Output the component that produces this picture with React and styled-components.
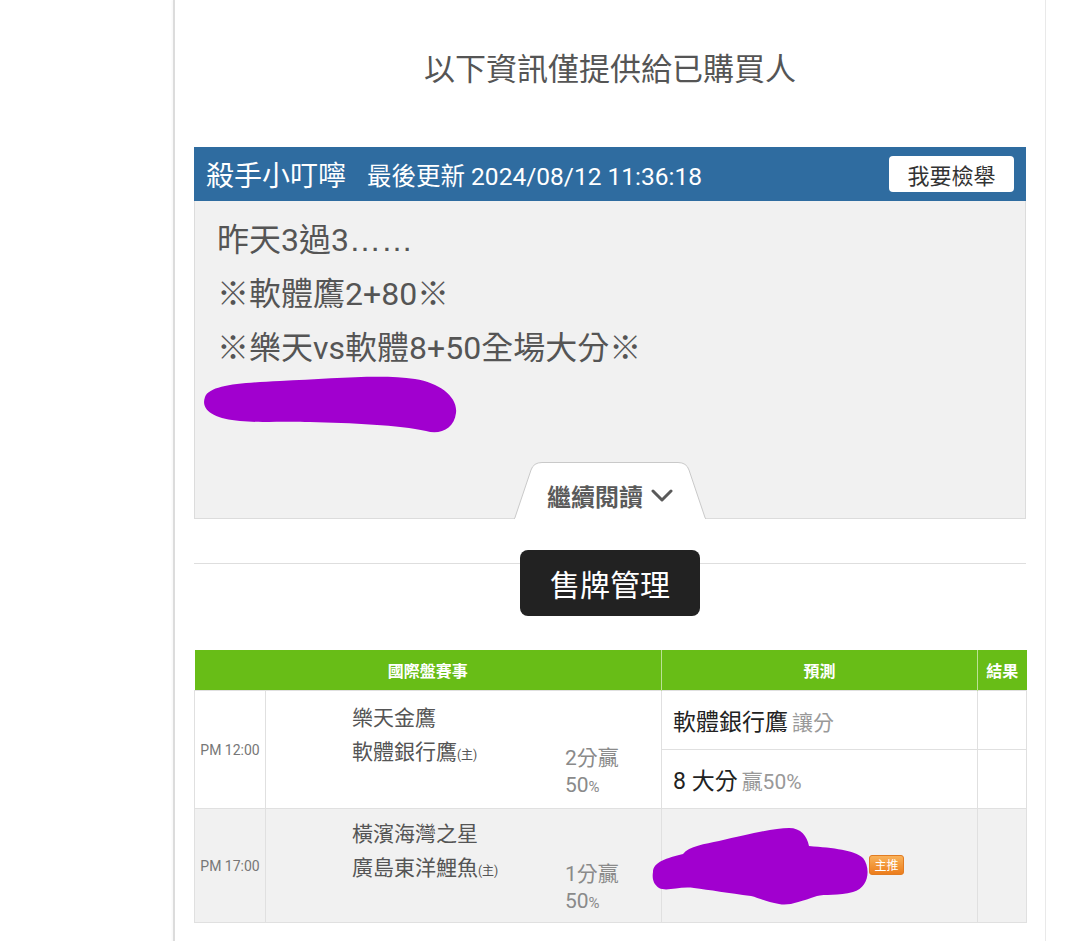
import React from 'react';
import styled, { createGlobalStyle } from 'styled-components';

const GlobalStyle = createGlobalStyle`
  html, body { margin: 0; padding: 0; background: #fff; }
  body { font-family: Roboto, "Noto Sans CJK TC", sans-serif; color: #555; }
`;

const Page = styled.div`
  margin-left: 173px;
  width: 832px;
  min-height: 941px;
  padding: 0 19px 20px;
  border-left: 2px solid #dcdcdc;
  border-right: 1px solid #e9e9e9;
  box-shadow: -1px 0 2px rgba(0, 0, 0, 0.04);
`;

const Notice = styled.h2`
  margin: 0;
  padding-top: 50px;
  height: 40px;
  line-height: 40px;
  text-align: center;
  font-size: 31px;
  font-weight: 400;
  color: #555;
`;

const PostCard = styled.section`
  margin-top: 57px;
`;

const PostHeader = styled.header`
  height: 54px;
  background: #2f6ca0;
  display: flex;
  align-items: center;
  padding: 0 12px;
  color: #fff;
`;

const Author = styled.span`
  font-size: 28px;
`;

const Updated = styled.span`
  font-size: 24.5px;
  margin-left: 21px;
`;

const ReportButton = styled.button`
  margin-left: auto;
  width: 125px;
  height: 36px;
  background: #fff;
  border: none;
  border-radius: 4px;
  font-family: inherit;
  font-size: 22px;
  color: #333;
  padding: 0;
`;

const PostBody = styled.div`
  background: #f1f1f1;
  border: 1px solid #dcdcdc;
  border-top: none;
  height: 318px;
  display: flex;
  flex-direction: column;
  padding: 12px 0 0 22px;
  box-sizing: border-box;
`;

const PostLine = styled.p`
  margin: 0;
  font-size: 32px;
  line-height: 54px;
  color: #555;
`;

const Ellipsis = styled.span`
  font-family: "Liberation Sans", sans-serif;
`;

const Scribble = styled.svg`
  display: block;
  margin-left: ${(p) => p.$offset || 0}px;
  flex: none;
`;

const ReadMoreTab = styled.button`
  position: relative;
  align-self: center;
  margin: auto 0 -1px -22px;
  width: 192px;
  height: 57px;
  border: none;
  background: transparent;
  padding: 10px 0 0;
  display: flex;
  align-items: center;
  justify-content: center;
  font-family: inherit;
  font-size: 24px;
  font-weight: 700;
  color: #5a5a5a;
`;

const TabShape = styled.svg`
  position: absolute;
  left: 0;
  top: 0;
  z-index: 0;
`;

const TabLabel = styled.span`
  position: relative;
  z-index: 1;
  display: flex;
  align-items: center;
  gap: 8px;
`;

const Divider = styled.div`
  margin-top: 44px;
  border-top: 1px solid #dedede;
  display: flex;
  justify-content: center;
`;

const ManageButton = styled.button`
  margin-top: -14px;
  width: 180px;
  height: 66px;
  background: #222;
  border: none;
  border-radius: 8px;
  color: #fff;
  font-family: inherit;
  font-size: 30px;
  padding: 0;
`;

const Table = styled.table`
  margin-top: 34px;
  width: 832px;
  border-collapse: collapse;
  table-layout: fixed;
`;

const HeadCell = styled.th`
  height: 40px;
  padding: 0;
  background: #68bd17;
  color: #fff;
  font-size: 16px;
  font-weight: 700;
  text-align: center;
  border-left: 1px solid rgba(255, 255, 255, 0.55);
  &:first-child { border-left: none; }
`;

const Row = styled.tr`
  background: ${(p) => (p.$shaded ? '#f1f1f1' : '#fff')};
`;

const Cell = styled.td`
  border: 1px solid #e0e0e0;
  padding: 0;
  vertical-align: middle;
  height: ${(p) => (p.$h ? `${p.$h}px` : 'auto')};
`;

const TimeCell = styled(Cell)`
  text-align: center;
  font-size: 14px;
  color: #777;
`;

const Match = styled.div`
  display: flex;
  padding: 8px 0 5px 86px;
`;

const Teams = styled.div`
  flex: 0 0 213px;
  font-size: 21px;
  line-height: 34px;
  color: #555;
`;

const Home = styled.small`
  font-size: 12px;
`;

const Odds = styled.div`
  margin-top: 44px;
  font-size: 21px;
  line-height: 27px;
  color: #8a8a8a;
`;

const Pct = styled.small`
  font-size: 15px;
`;

const PredCell = styled(Cell)`
  padding-left: 11px;
`;

const PredMain = styled.span`
  font-size: 23px;
  color: #222;
`;

const PredSub = styled.span`
  font-size: 21px;
  color: #999;
`;

const PredRow = styled.div`
  display: flex;
  align-items: center;
`;

const Badge = styled.span`
  display: inline-flex;
  align-items: center;
  justify-content: center;
  width: 35px;
  height: 20px;
  box-sizing: border-box;
  border: 1px solid #e27c22;
  border-radius: 3px;
  background: linear-gradient(#f9b25a, #ec7d1c);
  color: #fff;
  font-size: 12px;
  margin-top: -2px;
`;

const ChevronIcon = () => (
  <svg width="22" height="14" viewBox="0 0 22 14">
    <path d="M2 2 L11 11 L20 2" fill="none" stroke="#5a5a5a" strokeWidth="3" strokeLinecap="round" strokeLinejoin="round" />
  </svg>
);

export default function App() {
  return (
    <>
      <GlobalStyle />
      <Page>
        <Notice>以下資訊僅提供給已購買人</Notice>
        <PostCard>
          <PostHeader>
            <Author>殺手小叮嚀</Author>
            <Updated>最後更新 2024/08/12 11:36:18</Updated>
            <ReportButton>我要檢舉</ReportButton>
          </PostHeader>
          <PostBody>
            <PostLine>昨天3過3<Ellipsis>……</Ellipsis></PostLine>
            <PostLine>※軟體鷹2+80※</PostLine>
            <PostLine>※樂天vs軟體8+50全場大分※</PostLine>
            <Scribble $offset={-17} width="262" height="60" viewBox="0 0 262 60">
              <path
                d="M5 22 C10 10 40 8 80 6 C130 4 180 -1 215 4 C240 8 258 22 256 38 C254 54 240 60 226 56 C200 50 150 48 110 47 C80 46 60 48 40 46 C15 44 0 36 5 22 Z"
                fill="#a100cf"
              />
            </Scribble>
            <ReadMoreTab>
              <TabShape width="192" height="57" viewBox="0 0 192 57">
                <path d="M0.5 57 L17 8 Q19.5 0.5 28 0.5 L164 0.5 Q172.5 0.5 175 8 L191.5 57 Z" fill="#fff" stroke="#c9c9c9" />
                <path d="M1 57 L191 57" stroke="#fff" strokeWidth="2" />
              </TabShape>
              <TabLabel>
                繼續閱讀 <ChevronIcon />
              </TabLabel>
            </ReadMoreTab>
          </PostBody>
        </PostCard>

        <Divider>
          <ManageButton>售牌管理</ManageButton>
        </Divider>

        <Table>
          <colgroup>
            <col style={{ width: 71 }} />
            <col style={{ width: 396 }} />
            <col style={{ width: 316 }} />
            <col style={{ width: 49 }} />
          </colgroup>
          <thead>
            <tr>
              <HeadCell colSpan={2}>國際盤賽事</HeadCell>
              <HeadCell>預測</HeadCell>
              <HeadCell>結果</HeadCell>
            </tr>
          </thead>
          <tbody>
            <Row>
              <TimeCell rowSpan={2}>PM 12:00</TimeCell>
              <Cell rowSpan={2}>
                <Match>
                  <Teams>
                    <div>樂天金鷹</div>
                    <div>軟體銀行鷹<Home>(主)</Home></div>
                  </Teams>
                  <Odds>
                    <div>2分贏</div>
                    <div>50<Pct>%</Pct></div>
                  </Odds>
                </Match>
              </Cell>
              <PredCell $h={58}>
                <PredMain>軟體銀行鷹</PredMain> <PredSub>讓分</PredSub>
              </PredCell>
              <Cell />
            </Row>
            <Row>
              <PredCell $h={58}>
                <PredMain>8 大分</PredMain> <PredSub>贏50%</PredSub>
              </PredCell>
              <Cell />
            </Row>
            <Row $shaded>
              <TimeCell>PM 17:00</TimeCell>
              <Cell>
                <Match>
                  <Teams>
                    <div>橫濱海灣之星</div>
                    <div>廣島東洋鯉魚<Home>(主)</Home></div>
                  </Teams>
                  <Odds>
                    <div>1分贏</div>
                    <div>50<Pct>%</Pct></div>
                  </Odds>
                </Match>
              </Cell>
              <PredCell>
                <PredRow>
                  <Scribble $offset={-24} width="220" height="80" viewBox="0 0 220 80">
                    <path
                      d="M4 46 C4 36 18 32 34 28 C40 20 56 18 70 15 C100 8 125 2 140 2 C152 2 158 10 160 20 C185 22 205 24 214 32 C222 42 220 62 204 66 C190 70 175 68 168 70 C150 76 140 80 130 78 C118 76 110 72 102 70 C80 67 60 64 45 62 C30 60 18 66 10 62 C4 58 3 52 4 46 Z"
                      fill="#a100cf"
                    />
                  </Scribble>
                  <Badge>主推</Badge>
                </PredRow>
              </PredCell>
              <Cell />
            </Row>
          </tbody>
        </Table>
      </Page>
    </>
  );
}
